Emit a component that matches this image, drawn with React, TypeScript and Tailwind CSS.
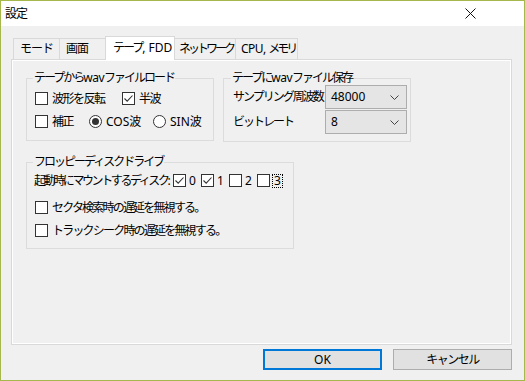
import React from 'react';

// Japanese runs are condensed to mimic Meiryo UI; Latin runs keep normal spacing
const J = ({ children, t = 'tracking-[-2px]' }: { children: React.ReactNode; t?: string }) => (
  <span className={t}>{children}</span>
);

const CheckBox = ({ checked }: { checked?: boolean }) => (
  <span className="w-[13px] h-[13px] border border-[#333] bg-white flex items-center justify-center shrink-0">
    {checked && (
      <svg width="11" height="11" viewBox="0 0 11 11">
        <path d="M1.5 5.5 L4.2 8.2 L9.5 2.5" fill="none" stroke="#333" strokeWidth="1.1" />
      </svg>
    )}
  </span>
);

const Radio = ({ checked }: { checked?: boolean }) => (
  <span className="w-[13px] h-[13px] rounded-full border border-[#333] bg-white flex items-center justify-center shrink-0">
    {checked && <span className="w-[7px] h-[7px] rounded-full bg-[#333]" />}
  </span>
);

const Option = ({ label, checked, radio, width }: { label: React.ReactNode; checked?: boolean; radio?: boolean; width: string }) => (
  <div className={`flex items-center gap-[4px] h-[17px] ${width}`}>
    {radio ? <Radio checked={checked} /> : <CheckBox checked={checked} />}
    <span className="whitespace-nowrap">{label}</span>
  </div>
);

const Select = ({ value }: { value: string }) => (
  <div className="w-[82px] h-[24px] border border-[#adadad] bg-[#e5e5e5] flex items-center justify-between pl-[5px] pr-[7px]">
    <span>{value}</span>
    <svg width="9" height="5" viewBox="0 0 9 5">
      <path d="M0.5 0.5 L4.5 4.5 L8.5 0.5" fill="none" stroke="#444" strokeWidth="1" />
    </svg>
  </div>
);

const tabs: { label: React.ReactNode; key: string; w: string; pad: string; active?: boolean }[] = [
  { key: 'mode', label: <J t="tracking-[-1px]">モード</J>, w: 'w-[47px]', pad: 'pl-[6px]' },
  { key: 'screen', label: <J t="tracking-[-1px]">画面</J>, w: 'w-[47px]', pad: 'pl-[6px]' },
  { key: 'tape', label: <><J>テープ</J>, FDD</>, w: 'w-[70px]', pad: 'pl-[7px]', active: true },
  { key: 'net', label: <J t="tracking-[-3px]">ネットワーク</J>, w: 'w-[62px]', pad: 'pl-[4px]' },
  { key: 'cpu', label: <><span className="tracking-[-0.5px]">CPU, </span><J t="tracking-[-3px]">メモリ</J></>, w: 'w-[63px]', pad: 'pl-[5px]' },
];

export default function App() {
  return (
    <div className="w-[525px] h-[381px] border border-[#a6b74b] flex flex-col bg-[#f0f0f0] text-[12px] leading-[16px] text-black font-['Noto_Sans','Noto_Sans_CJK_JP',sans-serif]">
      {/* title bar */}
      <div className="h-[25px] bg-white flex items-center justify-between pl-[4px] pr-[48px] shrink-0">
        <span className="tracking-[-1px]">設定</span>
        <svg width="11" height="11" viewBox="0 0 11 11">
          <path d="M0.5 0.5 L10.5 10.5 M10.5 0.5 L0.5 10.5" stroke="#111" strokeWidth="1" />
        </svg>
      </div>

      <div className="flex-1 flex flex-col pl-[10px] pr-[12px] pt-[10px]">
        {/* tabs */}
        <div className="flex items-end h-[23px] pl-[2px]">
          {tabs.map((t) =>
            t.active ? (
              <div
                key={t.key}
                className={`${t.w} ${t.pad} h-[24px] -mb-px -ml-px relative z-10 bg-white border border-b-0 border-[#d9d9d9] pt-[3px] whitespace-nowrap`}
              >
                {t.label}
              </div>
            ) : (
              <div
                key={t.key}
                className={`${t.w} ${t.pad} h-[21px] -ml-px first:ml-0 bg-[#f0f0f0] border border-b-0 border-[#d9d9d9] pt-[2px] whitespace-nowrap`}
              >
                {t.label}
              </div>
            )
          )}
        </div>

        {/* panel */}
        <div className="w-[501px] h-[286px] border border-[#d9d9d9] shadow-[inset_1px_1px_0_#fff,inset_-1px_-1px_0_#fff] pl-[14px] pt-[10px] flex flex-col">
          <div className="flex gap-[9px]">
            <fieldset className="w-[188px] h-[71px] border border-[#dcdcdc] px-[8px]">
              <legend className="-ml-[2px] px-[1px] whitespace-nowrap">
                <J>テープから</J>
                <span className="tracking-[-0.5px]">wav</span>
                <J>ファイルロード</J>
              </legend>
              <div className="flex flex-col gap-[6px] pt-[4px]">
                <div className="flex">
                  <Option label={<J t="tracking-[-1.5px]">波形を反転</J>} width="w-[87px]" />
                  <Option label={<J t="tracking-[-1.5px]">半波</J>} checked width="w-[60px]" />
                </div>
                <div className="flex">
                  <Option label={<J t="tracking-[-1.5px]">補正</J>} width="w-[54px]" />
                  <Option label={<>COS<J t="tracking-[-1px]">波</J></>} radio checked width="w-[64px]" />
                  <Option label={<>SIN<J t="tracking-[-1px]">波</J></>} radio width="w-[50px]" />
                </div>
              </div>
            </fieldset>

            <fieldset className="w-[188px] h-[72px] border border-[#dcdcdc] pl-[9px] pr-[3px]">
              <legend className="-ml-[2px] px-[1px] whitespace-nowrap">
                <J>テープに</J>
                <span className="tracking-[-0.5px]">wav</span>
                <J>ファイル保存</J>
              </legend>
              <div className="flex flex-col gap-[1px] -mt-[1px]">
                <div className="flex items-center">
                  <span className="w-[92px] whitespace-nowrap tracking-[-2px]">サンプリング周波数</span>
                  <Select value="48000" />
                </div>
                <div className="flex items-center">
                  <span className="w-[92px] whitespace-nowrap tracking-[-2px]">ビットレート</span>
                  <Select value="8" />
                </div>
              </div>
            </fieldset>
          </div>

          <fieldset className="mt-[12px] w-[265px] h-[95px] border border-[#dcdcdc] px-[8px]">
            <legend className="-ml-[2px] px-[1px] tracking-[-2px] whitespace-nowrap">フロッピーディスクドライブ</legend>
            <div className="flex items-center h-[17px] mt-[2px]">
              <span className="w-[139px] -ml-[1px] whitespace-nowrap">
                <J t="tracking-[-2.4px]">起動時にマウントするディスク</J>:
              </span>
              {['0', '1', '2', '3'].map((d, i) => (
                <div key={d} className="w-[28px] flex items-center gap-[2px]">
                  <CheckBox checked={i < 2} />
                  {i === 3 ? (
                    <span className="border border-dotted border-black leading-[12px] px-[1px]">{d}</span>
                  ) : (
                    <span className="pl-[1px]">{d}</span>
                  )}
                </div>
              ))}
            </div>
            <div className="mt-[10px]">
              <Option label={<J t="tracking-[-1.8px]">セクタ検索時の遅延を無視する。</J>} width="w-[240px]" />
            </div>
            <div className="mt-[6px]">
              <Option label={<J t="tracking-[-1.8px]">トラックシーク時の遅延を無視する。</J>} width="w-[240px]" />
            </div>
          </fieldset>
        </div>

        {/* buttons */}
        <div className="flex justify-end gap-[11px] mt-[4px]">
          <button className="w-[119px] h-[21px] border-2 border-[#0078d7] bg-[#e1e1e1] flex items-center justify-center">
            OK
          </button>
          <button className="w-[119px] h-[21px] border border-[#adadad] bg-[#e1e1e1] flex items-center justify-center tracking-[-1.5px]">
            キャンセル
          </button>
        </div>
      </div>
    </div>
  );
}
